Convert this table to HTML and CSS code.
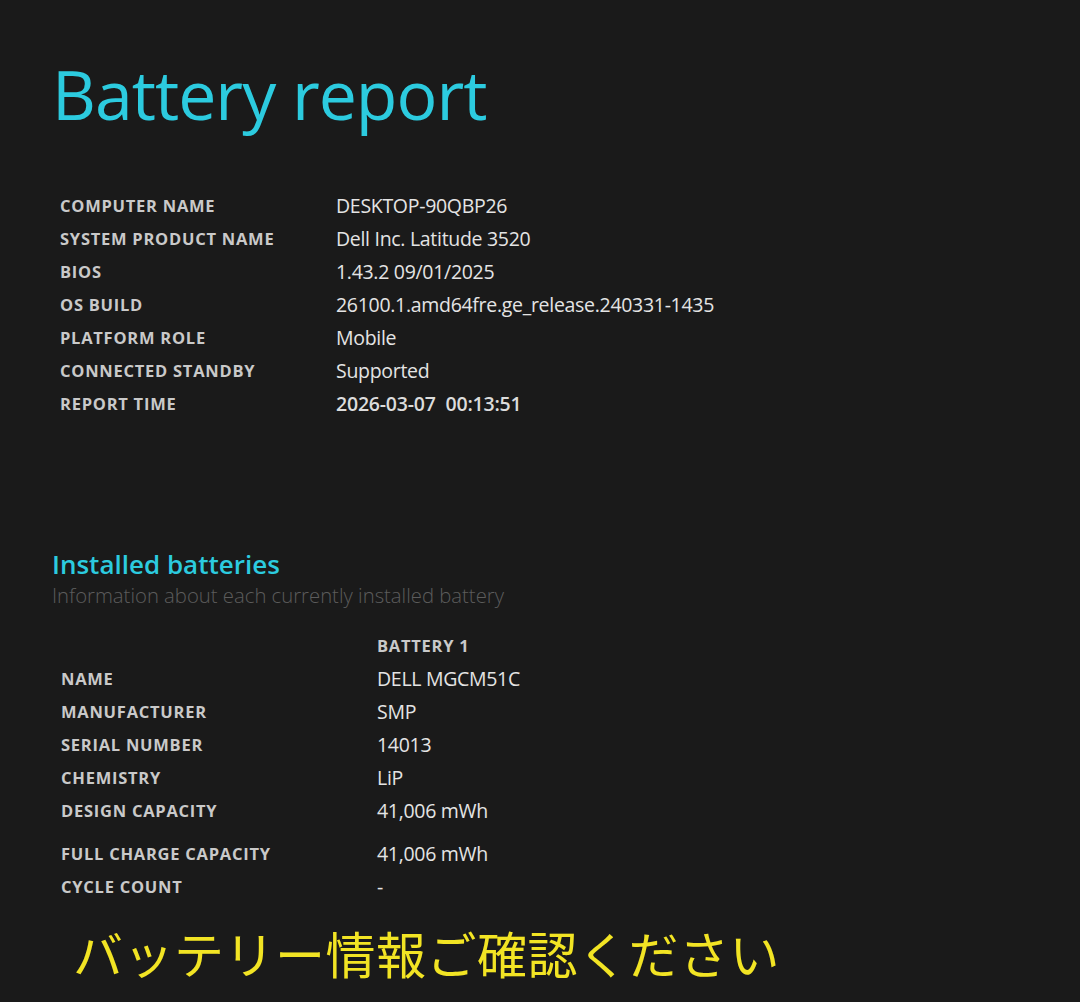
FILE: index.html
```html
<!DOCTYPE html>
<html lang="ja">
<head>
<meta charset="utf-8">
<title>Battery report</title>
<link rel="stylesheet" href="styles.css">
</head>
<body>
<main class="page">
  <h1 class="title">Battery report</h1>
  <dl class="info">
    <dt>COMPUTER NAME</dt><dd>DESKTOP-90QBP26</dd>
    <dt>SYSTEM PRODUCT NAME</dt><dd>Dell Inc. Latitude 3520</dd>
    <dt>BIOS</dt><dd>1.43.2 09/01/2025</dd>
    <dt>OS BUILD</dt><dd>26100.1.amd64fre.ge_release.240331-1435</dd>
    <dt>PLATFORM ROLE</dt><dd>Mobile</dd>
    <dt>CONNECTED STANDBY</dt><dd>Supported</dd>
    <dt>REPORT TIME</dt><dd class="strong">2026-03-07&nbsp; 00:13:51</dd>
  </dl>

  <section class="batteries">
    <h2 class="section-title">Installed batteries</h2>
    <p class="section-sub">Information about each currently installed battery</p>
    <dl class="info bat">
      <dt></dt><dd class="col-head">BATTERY 1</dd>
      <dt>NAME</dt><dd>DELL MGCM51C</dd>
      <dt>MANUFACTURER</dt><dd>SMP</dd>
      <dt>SERIAL NUMBER</dt><dd>14013</dd>
      <dt>CHEMISTRY</dt><dd>LiP</dd>
      <dt>DESIGN CAPACITY</dt><dd>41,006 mWh</dd>
      <dt>FULL CHARGE CAPACITY</dt><dd>41,006 mWh</dd>
      <dt>CYCLE COUNT</dt><dd>-</dd>
    </dl>
  </section>

  <p class="note">バッテリー情報ご確認ください</p>
</main>
</body>
</html>
```

FILE: styles.css
```css
html, body {
  margin: 0;
  padding: 0;
  background: #1a1a1a;
}
body {
  width: 1080px;
  height: 1002px;
  overflow: hidden;
  font-family: "Open Sans", "Noto Sans", sans-serif;
  color: #e6e6e6;
}
.page {
  padding: 52px 0 0 52px;
}
.title {
  margin: 0;
  font-weight: 400;
  font-size: 68px;
  line-height: 84px;
  color: #2ccbdf;
  letter-spacing: -1px;
}
.info {
  display: grid;
  grid-template-columns: 276px auto;
  grid-auto-rows: 33px;
  align-items: center;
  margin: 53px 0 0 8px;
}
.info dt {
  margin: 0;
  font-weight: 700;
  font-size: 16.5px;
  color: #c9c9c9;
  letter-spacing: 0.75px;
}
.info dd {
  margin: 0;
  font-size: 19.5px;
  color: #e4e4e4;
  letter-spacing: -0.3px;
}
.info dd.strong {
  font-weight: 600;
  letter-spacing: -0.2px;
  color: #dcdcdc;
}
.batteries {
  margin-top: 128px;
}
.section-title {
  margin: 0;
  font-weight: 600;
  font-size: 26px;
  line-height: 32px;
  color: #2ccbdf;
}
.section-sub {
  margin: 0;
  font-weight: 300;
  font-size: 20.3px;
  line-height: 30px;
  color: #5c5c5c;
}
.info.bat {
  margin: 19px 0 0 9px;
  grid-template-columns: 316px auto;
  grid-template-rows: repeat(6, 33px) 43px 33px;
  align-items: end;
}
.info.bat dt, .info.bat dd {
  line-height: 33px;
}
.info.bat .col-head {
  font-weight: 700;
  font-size: 16.5px;
  color: #c9c9c9;
  letter-spacing: 0.75px;
}
.note {
  margin: 17px 0 0 21px;
  font-family: "Noto Sans CJK JP", sans-serif;
  font-weight: 400;
  font-size: 50px;
  line-height: 64px;
  color: #f2e424;
  letter-spacing: 0.5px;
}
```
